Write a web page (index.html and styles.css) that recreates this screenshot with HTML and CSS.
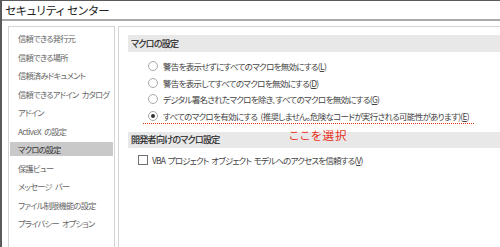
FILE: index.html
```html
<!DOCTYPE html>
<html lang="ja">
<head>
    <meta charset="UTF-8">
    <title>セキュリティ センター</title>
    <link rel="stylesheet" href="styles.css">
</head>
<body>

    <div class="window">
        <div class="titlebar">セキュリティ センター</div>

        <div class="panes">
            <!-- Left navigation -->
            <ul class="nav">
                <li>信頼できる発行元</li>
                <li>信頼できる場所</li>
                <li>信頼済みドキュメント</li>
                <li>信頼できるアドイン カタログ</li>
                <li>アドイン</li>
                <li>ActiveX の設定</li>
                <li class="active">マクロの設定</li>
                <li>保護ビュー</li>
                <li>メッセージ バー</li>
                <li>ファイル制限機能の設定</li>
                <li>プライバシー オプション</li>
            </ul>

            <!-- Settings -->
            <div class="content">
                <div class="section-head">マクロの設定</div>
                <div class="options">
                    <div class="option"><span class="radio"></span>警告を表示せずにすべてのマクロを無効にする(<u>L</u>)</div>
                    <div class="option"><span class="radio"></span>警告を表示してすべてのマクロを無効にする(<u>D</u>)</div>
                    <div class="option"><span class="radio"></span>デジタル署名されたマクロを除き、すべてのマクロを無効にする(<u>G</u>)</div>
                    <div class="option picked"><span class="radio checked"></span>すべてのマクロを有効にする (推奨しません。危険なコードが実行される可能性があります)(<u>E</u>)
                        <span class="note">ここを選択</span>
                    </div>
                </div>

                <div class="section-head second">開発者向けのマクロ設定</div>
                <div class="check-row"><span class="checkbox"></span>VBA プロジェクト オブジェクト モデルへのアクセスを信頼する(<u>V</u>)</div>
            </div>
        </div>
    </div>

</body>
</html>
```

FILE: styles.css
```css
body {
    margin: 0;
    background: #fff;
    font-family: "Noto Sans CJK JP", "Noto Sans", sans-serif;
    font-feature-settings: "palt";
    overflow: hidden;
}
.window {
    display: flex;
    flex-direction: column;
    height: 247px;
    border-top: 1px solid #5a5a5a;
    border-left: 2px solid #5a5a5a;
    box-sizing: border-box;
}
.titlebar {
    height: 18px;
    line-height: 18px;
    padding-left: 3px;
    font-size: 11.5px;
    color: #222;
    border-bottom: 2px solid #aaa;
}
.panes {
    flex: 1;
    display: flex;
    gap: 3px;
    padding: 5px 0 0 6px;
    min-height: 0;
}
.nav {
    list-style: none;
    margin: 0;
    padding: 4px 1px 0;
    width: 103px;
    border: 1px solid #d4d4d4;
    border-bottom: none;
}
.nav li {
    height: 14px;
    line-height: 14px;
    margin-bottom: 4.5px;
    padding-left: 8px;
    font-size: 8.2px;
    letter-spacing: -0.7px;
    word-spacing: 2px;
    color: #666;
    white-space: nowrap;
}
.nav li.active {
    background: #c9c9c9;
    color: #333;
}
.content {
    flex: 1;
    border: 1px solid #d4d4d4;
    border-right: none;
    border-bottom: none;
    padding: 8px 0 0 9px;
}
.section-head {
    height: 17px;
    line-height: 17px;
    padding-left: 3px;
    background: #e8e8e8;
    font-size: 9px;
    letter-spacing: -0.7px;
    color: #2a2a2a;
    -webkit-text-stroke: 0.2px #2a2a2a;
}
.section-head.second {
    margin-top: 8px;
    height: 16px;
    line-height: 16px;
}
.options {
    padding-top: 6px;
}
.option {
    position: relative;
    display: flex;
    align-items: center;
    height: 16.5px;
    padding-left: 20px;
    font-size: 8.5px;
    letter-spacing: -0.7px;
    word-spacing: 2px;
    color: #444;
    white-space: nowrap;
}
.radio {
    width: 8px;
    height: 8px;
    border: 1px solid #a8a8a8;
    border-radius: 50%;
    margin-right: 5px;
    box-sizing: content-box;
    display: flex;
    align-items: center;
    justify-content: center;
    flex-shrink: 0;
}
.radio.checked::after {
    content: "";
    width: 4px;
    height: 4px;
    border-radius: 50%;
    background: #333;
}
.option.picked::after {
    content: "";
    position: absolute;
    left: 15px;
    width: 331px;
    bottom: 0;
    border-bottom: 1px dotted #e8301c;
}
.note {
    position: absolute;
    left: 161px;
    top: 19px;
    font-size: 11.5px;
    letter-spacing: 1px;
    color: #e8301c;
}
.check-row {
    display: flex;
    align-items: center;
    height: 16.5px;
    margin-top: 4px;
    padding-left: 10px;
    font-size: 8.5px;
    letter-spacing: -0.8px;
    word-spacing: 1.5px;
    color: #444;
    white-space: nowrap;
}
.checkbox {
    width: 8px;
    height: 8px;
    border: 1px solid #707070;
    margin-right: 4px;
    flex-shrink: 0;
}
```
